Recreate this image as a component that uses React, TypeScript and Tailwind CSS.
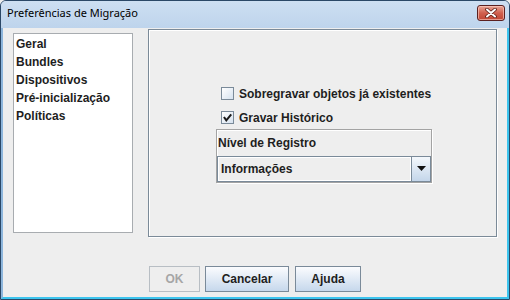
import React from "react";

const body = { fontFamily: '"Liberation Sans", Arial, sans-serif' };

function CheckBox({ checked, label }: { checked: boolean; label: string }) {
  return (
    <div className="flex h-[24px] items-center pl-[5px]">
      <div className="flex h-[13px] w-[13px] items-center justify-center border border-[#7a8a99] bg-gradient-to-br from-[#ffffff] to-[#d6e2ef]">
        {checked && (
          <svg width="11" height="11" viewBox="0 0 11 11">
            <path d="M2.5 5.8 L4.3 8.4 L8.6 3.2" fill="none" stroke="#1a1a1a" strokeWidth="2" strokeLinecap="square" />
          </svg>
        )}
      </div>
      <span className="ml-[5px] text-[12px] font-bold leading-none text-[#1e1e1e]">{label}</span>
    </div>
  );
}

export default function App() {
  const items = ["Geral", "Bundles", "Dispositivos", "Pré-inicialização", "Políticas"];
  return (
    <div className="h-[300px] w-[510px] overflow-hidden bg-[#eeeeee]">
      <div className="flex h-[300px] w-[510px] flex-col rounded-t-[6px] border border-[#2b4867] bg-[#c0d5ec]">
        {/* Title bar */}
        <div className="flex h-[27px] shrink-0 items-start justify-between rounded-t-[5px] bg-gradient-to-b from-[#cddff2] to-[#bed4ec] pl-[6px] pr-[4px]">
          <span
            className="mt-[5px] text-[11px] leading-[14px] text-black"
            style={{ fontFamily: '"Noto Sans", "Open Sans", sans-serif' }}
          >
            Preferências de Migração
          </span>
          <div className="mt-[4px] flex h-[16px] w-[28px] items-center justify-center rounded-[3px] border border-[#5b2020] bg-gradient-to-b from-[#e9a596] via-[#d0604e] to-[#c04634] shadow-[inset_0_0_0_1px_rgba(255,210,200,0.6)]">
            <svg width="14" height="10" viewBox="0 0 14 10">
              <path d="M3 1.5 L11 8.5 M11 1.5 L3 8.5" stroke="#5a1c14" strokeWidth="3.6" strokeLinecap="round" />
              <path d="M3 1.5 L11 8.5 M11 1.5 L3 8.5" stroke="#ffffff" strokeWidth="2" strokeLinecap="round" />
            </svg>
          </div>
        </div>

        {/* Content */}
        <div
          className="flex flex-1 flex-col border-b-2 border-l-2 border-r-2 border-b-[#3cc4ee] border-l-[#8eb6dc] border-r-[#3cc4ee] bg-[#eeeeee]"
          style={body}
        >
          <div className="flex items-start pl-[10px]">
            <div className="mt-[5px] h-[200px] w-[120px] border border-[#a8acb0] bg-white pt-[1px]">
              {items.map((t) => (
                <div key={t} className="flex h-[18px] items-center pl-[2px] text-[12px] font-bold text-[#1e1e1e]">
                  {t}
                </div>
              ))}
            </div>
            <div className="ml-[15px] mt-[1px] flex h-[208px] w-[349px] items-center justify-center border border-[#7b8a98] shadow-[1px_1px_0_#ffffff,inset_1px_1px_0_#ffffff]">
              <div className="ml-[3px] mt-[-2px] flex w-[216px] flex-col">
                <CheckBox checked={false} label="Sobregravar objetos já existentes" />
                <CheckBox checked={true} label="Gravar Histórico" />
                <div className="mt-[-1px] flex flex-col border border-[#a3a3a3] shadow-[1px_1px_0_#ffffff,inset_1px_1px_0_#ffffff]">
                  <div className="flex h-[26px] items-center pl-[1px] text-[12px] font-bold text-[#1e1e1e]">
                    Nível de Registro
                  </div>
                  <div className="flex h-[26px] border border-[#7a8a99]">
                    <div className="flex flex-1 items-center border border-white bg-[#eeeeee] pl-[2px] text-[12px] font-bold text-[#1e1e1e]">
                      Informações
                    </div>
                    <div className="flex w-[19px] items-center justify-center border-l border-[#7a8a99] bg-gradient-to-b from-[#f4f8fc] to-[#c4d6ea]">
                      <svg width="9" height="5" viewBox="0 0 9 5">
                        <path d="M0 0 L9 0 L4.5 5 Z" fill="#111111" />
                      </svg>
                    </div>
                  </div>
                </div>
              </div>
            </div>
          </div>

          <div className="mt-[29px] flex gap-[5px] pl-[146px]">
            <div className="flex h-[26px] w-[51px] items-center justify-center border border-[#b8bec4] bg-[#eeeeee] text-[12px] font-bold text-[#a6a6a6]">
              OK
            </div>
            <div className="flex h-[26px] w-[84px] items-center justify-center border border-[#7a8a99] bg-gradient-to-b from-[#fbfcfe] to-[#c6d8ec] text-[12px] font-bold text-[#1e1e1e]">
              Cancelar
            </div>
            <div className="ml-[1px] flex h-[26px] w-[66px] items-center justify-center border border-[#7a8a99] bg-gradient-to-b from-[#fbfcfe] to-[#c6d8ec] text-[12px] font-bold text-[#1e1e1e]">
              Ajuda
            </div>
          </div>
        </div>
      </div>
    </div>
  );
}
